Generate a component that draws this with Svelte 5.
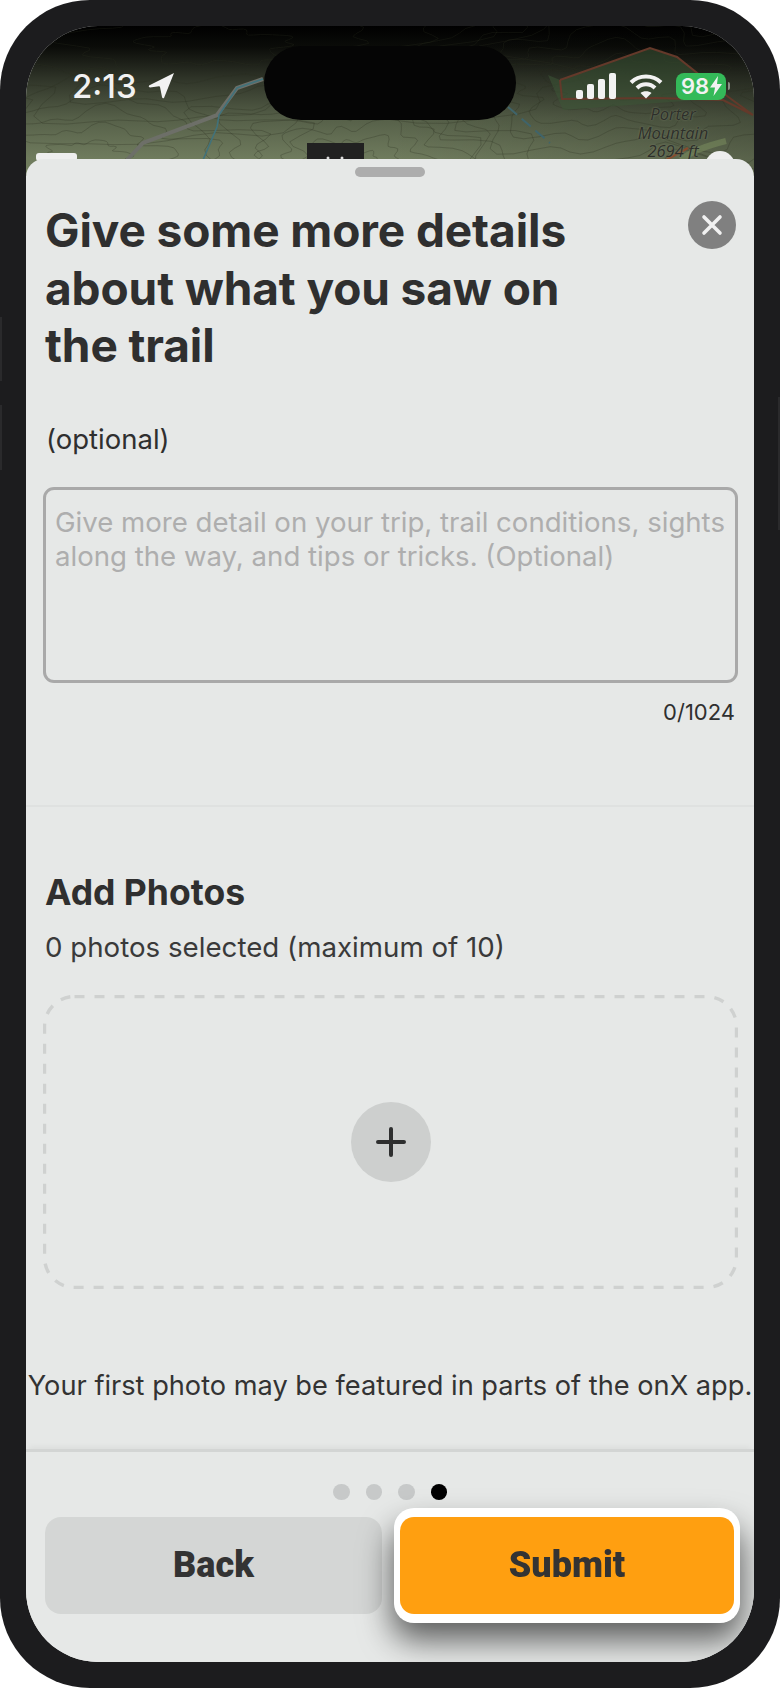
<script>
  function ring(cx, cy, rx, ry, seed) {
    let d = '';
    for (let k = 0; k <= 96; k++) {
      const a = (k / 96) * Math.PI * 2;
      const n = 1 + 0.16 * Math.sin(a * 5 + seed) + 0.08 * Math.sin(a * 11 + seed * 2.3) + 0.05 * Math.sin(a * 17 + seed * 0.7);
      const x = cx + Math.cos(a) * rx * n;
      const y = cy + Math.sin(a) * ry * n;
      d += `${k ? 'L' : 'M'}${x.toFixed(1)} ${y.toFixed(1)} `;
    }
    return d + 'Z';
  }
  const contours = [];
  const hills = [
    [330, 140, 26, 14, 6],
    [60, 130, 40, 14, 5],
    [590, 60, 34, 13, 7],
    [190, 20, 70, 18, 5]
  ];
  hills.forEach(([cx, cy, stepX, stepY, count], h) => {
    for (let i = 1; i <= count; i++) {
      contours.push(ring(cx, cy, stepX * i, stepY * i, h + i * 0.35));
    }
  });
  const dots = [false, false, false, true];
</script>

<div class="phone">
  <i class="side side-a"></i>
  <i class="side side-b"></i>
  <i class="side side-c"></i>
  <div class="screen">
    <header class="map">
      <svg class="terrain" viewBox="0 0 728 150" aria-hidden="true">
        <defs>
          <linearGradient id="olive" x1="0" y1="0" x2="0" y2="1">
            <stop offset="0" stop-color="#000" />
            <stop offset="0.14" stop-color="#0b0c09" />
            <stop offset="0.35" stop-color="#2f3428" />
            <stop offset="0.62" stop-color="#566049" />
            <stop offset="0.88" stop-color="#6f7b5d" />
            <stop offset="1" stop-color="#737f60" />
          </linearGradient>
          <linearGradient id="dim" x1="0" y1="0" x2="1" y2="0">
            <stop offset="0" stop-color="#000" stop-opacity="0" />
            <stop offset="1" stop-color="#000" stop-opacity="0.2" />
          </linearGradient>
        </defs>
        <rect width="728" height="150" fill="url(#olive)" />
        <rect x="364" width="364" height="150" fill="url(#dim)" />
        {#each contours as d}
          <path {d} fill="none" stroke="#2a2f22" stroke-width="1" opacity="0.28" />
        {/each}
        <path d="M522 49 L534 54 L624 22 L651 31 L700 72 L631 77 L537 84Z" fill="#3d5536" opacity="0.55" />
        <path d="M534 54 L624 22 L651 31 L690 62 L727 89 M534 54 L536 73 L631 72 L697 74 L727 89" fill="none" stroke="#64392a" stroke-width="2" />
        <path d="M662 122 L640 134" fill="none" stroke="#8a4a2c" stroke-width="2" />
        <path d="M700 115 C680 120 665 125 655 134" fill="none" stroke="#7d9160" stroke-width="6" opacity="0.5" />
        <path d="M101 134 L117 117 L191 89 L211 62 L237 53" fill="none" stroke="#6d6f68" stroke-width="4" />
        <path d="M177 134 L191 101 L193 89 L211 62 L237 53" fill="none" stroke="#41727a" stroke-width="1.6" />
        <path d="M482 81 L524 117" fill="none" stroke="#3f646b" stroke-width="2" stroke-dasharray="12 6" />
        <rect x="281" y="117" width="57" height="20" fill="#212121" />
        <circle cx="302" cy="132" r="1.5" fill="#ddd" />
        <circle cx="316" cy="132" r="1.5" fill="#ddd" />
        <rect x="10" y="127" width="41" height="8" rx="3" fill="#eee" />
        <circle cx="694" cy="140" r="15" fill="#eee" />
        <circle cx="694" cy="142" r="9" fill="#444" />
      </svg>

      <div class="place">Porter<br />Mountain<br />2694 ft</div>

      <div class="status">
        <div class="time">
          <span>2:13</span>
          <svg width="27" height="27" viewBox="0 0 27 27" aria-hidden="true">
            <path d="M1 13.5 L26 1 L16 26 Q14.5 27 14 25 L12 15 Q12 14.5 11 14.3 L2 15.5 Q0 15 1 13.5Z" fill="#f2f2f2" />
          </svg>
        </div>
        <div class="indicators">
          <svg class="signal" width="40" height="26" viewBox="0 0 40 26" aria-hidden="true">
            <rect x="0" y="17" width="7" height="9" rx="2" />
            <rect x="11" y="11" width="7" height="15" rx="2" />
            <rect x="22" y="6" width="7" height="20" rx="2" />
            <rect x="33" y="0" width="7" height="26" rx="2" />
          </svg>
          <svg class="wifi" width="34" height="26" viewBox="0 0 34 26" aria-hidden="true">
            <path d="M2 9.5 C10 1.5 24 1.5 32 9.5" />
            <path d="M8 15 C13 10 21 10 26 15" />
            <path d="M17 25.5 L11.5 20 C14 17.5 20 17.5 22.5 20Z" class="solid" />
          </svg>
          <div class="battery">
            <span>98</span>
            <svg width="12" height="20" viewBox="0 0 12 20" aria-hidden="true">
              <path d="M8 0 L0 11.5 H5 L3.5 20 L12 8 H7Z" fill="#f2f2f2" />
            </svg>
          </div>
          <i class="nub"></i>
        </div>
      </div>
      <div class="island"></div>
    </header>

    <main class="sheet">
      <div class="grabber"></div>
      <div class="title-row">
        <h1>Give some more details about what you saw on the trail</h1>
        <button class="close" aria-label="Close">
          <svg width="22" height="22" viewBox="0 0 22 22" aria-hidden="true">
            <path d="M3 3 L19 19 M19 3 L3 19" stroke="#f1f1f1" stroke-width="3.6" stroke-linecap="round" />
          </svg>
        </button>
      </div>
      <p class="optional">(optional)</p>
      <div class="field">Give more detail on your trip, trail conditions, sights along the way, and tips or tricks. (Optional)</div>
      <div class="count">0/1024</div>

      <hr />

      <h2>Add Photos</h2>
      <p class="selected">0 photos selected (maximum of 10)</p>

      <div class="drop">
        <svg class="dash" viewBox="0 0 695 294" aria-hidden="true">
          <rect x="1.5" y="1.5" width="692" height="291" rx="30" fill="none" stroke="#cfd1d0" stroke-width="3.4" stroke-dasharray="10 10" />
        </svg>
        <button class="add" aria-label="Add photo">
          <svg width="30" height="30" viewBox="0 0 30 30" aria-hidden="true">
            <path d="M15 2 V28 M2 15 H28" stroke="#2e2f2f" stroke-width="4" stroke-linecap="round" />
          </svg>
        </button>
      </div>

      <p class="note">Your first photo may be featured in parts of the onX app.</p>

      <footer class="foot">
        <div class="dots">
          {#each dots as on}
            <span class:on></span>
          {/each}
        </div>
        <div class="actions">
          <button class="back">Back</button>
          <button class="submit"><span>Submit</span></button>
        </div>
      </footer>
    </main>
  </div>
</div>

<style>
  :global(body) {
    margin: 0;
    background: #fff;
  }
  .phone {
    position: relative;
    width: 780px;
    height: 1688px;
    box-sizing: border-box;
    padding: 26px;
    background: #1c1c1e;
    border-radius: 90px;
    font-family: Inter, "Liberation Sans", sans-serif;
  }
  .side {
    position: absolute;
    width: 2px;
    background: #2a2a2c;
  }
  .side-a {
    left: 0;
    top: 317px;
    height: 64px;
  }
  .side-b {
    left: 0;
    top: 405px;
    height: 65px;
  }
  .side-c {
    right: 0;
    top: 397px;
    height: 133px;
  }
  .screen {
    position: relative;
    height: 1636px;
    border-radius: 72px;
    overflow: hidden;
    display: flex;
    flex-direction: column;
    background: #e6e8e7;
  }
  .map {
    position: relative;
    height: 133px;
    flex: none;
  }
  .terrain {
    position: absolute;
    top: 0;
    left: 0;
    width: 728px;
    height: 150px;
  }
  .place {
    position: absolute;
    left: 602px;
    top: 79px;
    width: 90px;
    font: italic 500 16.5px/18.5px "Open Sans", sans-serif;
    color: #2d2f2a;
    text-align: center;
    text-shadow: 0 0 2px #7a8268;
  }
  .status {
    position: relative;
    display: flex;
    justify-content: space-between;
    padding: 45px 24px 0 46px;
    color: #f2f2f2;
  }
  .time {
    display: flex;
    align-items: center;
    gap: 11px;
    font-size: 33px;
    font-weight: 500;
    line-height: 28px;
  }
  .time svg {
    margin-top: -1px;
  }
  .indicators {
    display: flex;
    align-items: center;
    height: 28px;
    margin-top: 1px;
  }
  .signal rect {
    fill: #f2f2f2;
  }
  .wifi {
    margin-left: 13px;
    margin-right: 13px;
  }
  .wifi path {
    fill: none;
    stroke: #f2f2f2;
    stroke-width: 4;
  }
  .wifi .solid {
    fill: #f2f2f2;
    stroke: none;
  }
  .battery {
    width: 50px;
    height: 27px;
    box-sizing: border-box;
    border-radius: 8px;
    background: #34ba59;
    display: flex;
    align-items: center;
    gap: 1px;
    padding-left: 5px;
    font-size: 22px;
    font-weight: 600;
    color: #f2f2f2;
  }
  .nub {
    width: 2px;
    height: 8px;
    margin-left: 2px;
    background: #8a8f85;
    border-radius: 0 2px 2px 0;
  }
  .island {
    position: absolute;
    left: 238px;
    top: 20px;
    width: 252px;
    height: 74px;
    border-radius: 37px;
    background: #050505;
  }
  .sheet {
    position: relative;
    flex: 1;
    display: flex;
    flex-direction: column;
    border-radius: 18px 18px 0 0;
    background: #e6e8e7;
    color: #2f2f2f;
    overflow: hidden;
  }
  .grabber {
    width: 70px;
    height: 10px;
    margin: 8px auto 0;
    border-radius: 5px;
    background: #adadad;
  }
  .title-row {
    display: flex;
    justify-content: space-between;
    padding: 24px 18px 0 19px;
  }
  h1 {
    margin: 1px 0 0;
    width: 575px;
    font-size: 46px;
    line-height: 57.5px;
    font-weight: 700;
    letter-spacing: -0.1px;
  }
  .close {
    width: 48px;
    height: 48px;
    flex: none;
    padding: 0;
    border: 0;
    border-radius: 50%;
    background: #808080;
    display: flex;
    align-items: center;
    justify-content: center;
  }
  .optional {
    margin: 48px 0 0 20px;
    font-size: 27.5px;
    line-height: 32px;
  }
  .field {
    box-sizing: border-box;
    width: 695px;
    height: 196px;
    margin: 32px 0 0 17px;
    padding: 15px 6px 0 9px;
    border: 3.5px solid #a9a9a9;
    border-radius: 11px;
    font-size: 27.6px;
    line-height: 34px;
    color: #aeaeae;
  }
  .count {
    margin: 16px 19px 0 0;
    text-align: right;
    font-size: 22px;
    line-height: 26px;
    color: #2f2f2f;
  }
  hr {
    width: 100%;
    margin: 80px 0 0;
    border: 0;
    border-top: 2px solid #dfe1e0;
  }
  h2 {
    margin: 66px 0 0 19px;
    font-size: 35.5px;
    line-height: 40px;
    font-weight: 700;
  }
  .selected {
    margin: 17px 0 0 19px;
    font-size: 27.7px;
    line-height: 34px;
    color: #3a3a3a;
  }
  .drop {
    position: relative;
    width: 695px;
    height: 294px;
    margin: 31px 0 0 17px;
    display: flex;
    align-items: center;
    justify-content: center;
  }
  .dash {
    position: absolute;
    inset: 0;
    width: 100%;
    height: 100%;
  }
  .add {
    position: relative;
    width: 80px;
    height: 80px;
    padding: 0;
    border: 0;
    border-radius: 50%;
    background: #cdcfce;
    display: flex;
    align-items: center;
    justify-content: center;
  }
  .note {
    margin: 80px 0 0;
    text-align: center;
    font-size: 27.2px;
    line-height: 34px;
    color: #333;
    white-space: nowrap;
  }
  .foot {
    margin-top: 46px;
    flex: 1;
    border-top: 3px solid #d3d5d4;
    box-shadow: 0 -5px 6px -3px rgba(0, 0, 0, 0.05);
    padding-top: 32px;
  }
  .dots {
    display: flex;
    justify-content: center;
    gap: 16px;
  }
  .dots span {
    width: 16.5px;
    height: 16px;
    border-radius: 50%;
    background: #c7c9c9;
  }
  .dots .on {
    background: #000;
  }
  .actions {
    display: flex;
    margin-top: 17px;
    padding-left: 19px;
    gap: 18px;
  }
  button {
    font-family: Roboto, "Liberation Sans", sans-serif;
  }
  .back,
  .submit {
    flex: none;
    height: 97px;
    padding: 0;
    border: 0;
    font-size: 36px;
    font-weight: 900;
    color: #333;
    border-radius: 16px;
  }
  .back {
    width: 337px;
    background: #d4d6d5;
  }
  .submit {
    width: 334px;
    background: #ff9f10;
    border-radius: 14px;
    box-shadow: 0 0 0 6px #fff, 0 3px 0 6px #fff, 0 -3px 0 6px #fff, 0 18px 32px 8px rgba(0, 0, 0, 0.6);
  }
  .submit span {
    filter: blur(0.7px);
    display: inline-block;
  }
</style>
